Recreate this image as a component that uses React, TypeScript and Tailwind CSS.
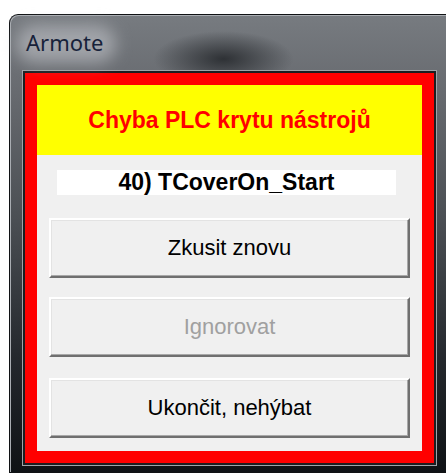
import React from 'react'

const sans = { fontFamily: '"Liberation Sans", Arial, sans-serif' }

function DialogButton({ label, disabled = false, className = '' }: { label: string; disabled?: boolean; className?: string }) {
  return (
    <button
      type="button"
      disabled={disabled}
      className={
        'ml-[12px] h-[60px] w-[361px] shrink-0 bg-[#f0f0f0] border-2 border-t-white border-l-white border-r-[#6f6f6f] border-b-[#6f6f6f] shadow-[inset_-1px_-1px_0_#a8a8a8,inset_1px_1px_0_#e3e3e3] flex items-center justify-center text-[22px] leading-none ' +
        (disabled ? 'text-[#a0a0a0] ' : 'text-black ') +
        className
      }
      style={sans}
    >
      {label}
    </button>
  )
}

export default function App() {
  return (
    <div className="w-[446px] h-[473px] bg-white pt-[14px] pl-[9px] flex overflow-hidden">
      {/* Aero-style window frame */}
      <div className="flex-1 flex flex-col border-t border-l border-b border-[#101214] rounded-tl-[9px] pl-[12px] pr-[9px] pb-[4px] shadow-[inset_1px_1px_0_#a9adb2] bg-[linear-gradient(to_bottom,#777b80_0%,#66696e_18%,#4a4e53_45%,#24282d_75%,#0f1215_100%)]">
        {/* Title bar */}
        <div className="relative h-[55px] -ml-[12px] pl-[16px] flex items-center bg-[radial-gradient(ellipse_70px_28px_at_50%_80%,#2e3135_0%,rgba(46,49,53,0)_100%)]">
          <div className="absolute left-[6px] top-[10px] w-[100px] h-[38px] rounded-full bg-[rgba(200,203,207,0.55)] blur-[8px]" />
          <span
            className="relative text-[22px] text-[#17223a] leading-none pb-[2px]"
            style={{ fontFamily: '"Noto Sans", "Open Sans", sans-serif' }}
          >
            Armote
          </span>
        </div>

        {/* Alarm panel */}
        <div className="border border-[#9ea3a8]">
          <div className="border-2 border-[#1b1d20]">
            <div className="bg-[#ff0000] p-[12px]">
              <div className="h-[70px] bg-[#ffff00] flex items-center justify-center">
                <span className="text-[23px] font-bold text-[#ff0000] leading-none" style={sans}>
                  Chyba PLC krytu nástrojů
                </span>
              </div>
              <div className="h-[296px] bg-[#f0f0f0] flex flex-col pt-[15px]">
                <div className="ml-[20px] w-[339px] h-[25px] bg-white flex items-center justify-center">
                  <span className="text-[23px] font-bold text-black leading-none" style={sans}>
                    40) TCoverOn_Start
                  </span>
                </div>
                <DialogButton label="Zkusit znovu" className="mt-[23px]" />
                <DialogButton label="Ignorovat" disabled className="mt-[19px]" />
                <DialogButton label="Ukončit, nehýbat" className="mt-[21px]" />
              </div>
            </div>
          </div>
        </div>
      </div>
    </div>
  )
}
